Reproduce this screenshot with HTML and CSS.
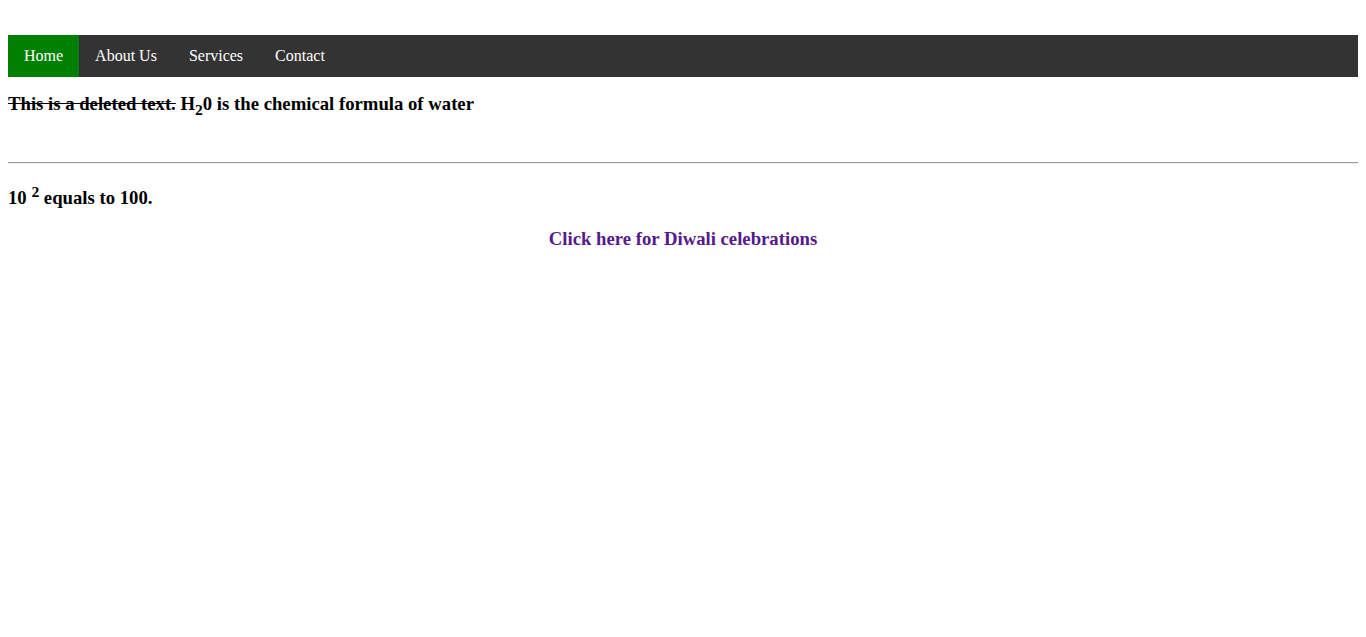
FILE: index.html
```html
<!DOCTYPE html>
<html>
<head>
<meta charset="utf-8">
<link rel="stylesheet" href="styles.css">
</head>
<body>
<ul class="nav">
  <li><a class="active" href="#">Home</a></li>
  <li><a href="#">About Us</a></li>
  <li><a href="#">Services</a></li>
  <li><a href="#">Contact</a></li>
</ul>
<h3 class="line1"><del>This is a deleted text.</del> H<sub>2</sub>0 is the chemical formula of water</h3>
<hr class="rule">
<h3 class="line2">10 <sup>2</sup> equals to 100.</h3>
<h3 class="center"><a class="link" href="#">Click here for Diwali celebrations</a></h3>
</body>
</html>
```
FILE: styles.css
```css
body {
  margin: 8px;
  font-family: "Liberation Serif", "Times New Roman", serif;
  background: #fff;
}
.nav {
  list-style: none;
  margin: 27px 0 0 0;
  padding: 0;
  background: #333;
  display: flex;
}
.nav a {
  display: block;
  color: #fff;
  text-decoration: none;
  padding: 12px 16px;
  font-size: 16px;
  line-height: 18px;
}
.nav a.active {
  background: #008000;
}
.line1, .line2, .center {
  font-size: 18.72px;
  line-height: 22px;
  font-weight: bold;
}
.line1 sub, .line2 sup {
  line-height: 0;
}
.line1 {
  margin: 16px 0 0 0;
}
.rule {
  margin: 47px 0 0 0;
  border: none;
  border-top: 1px solid #9a9a9a;
  border-bottom: 1px solid #eee;
}
.line2 {
  margin: 23px 0 0 0;
}
.center {
  text-align: center;
  margin: 19px 0 0 0;
}
.link {
  color: #551a8b;
  text-decoration: none;
}
```
